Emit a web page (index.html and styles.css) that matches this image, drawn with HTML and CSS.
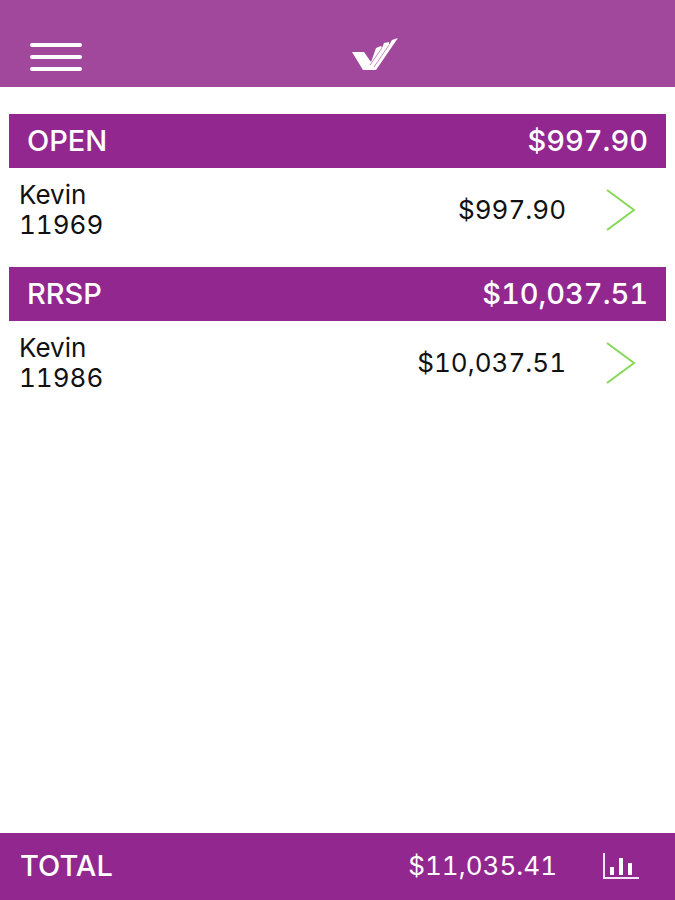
FILE: index.html
```html
<!DOCTYPE html>
<html lang="en">
<head>
  <meta charset="UTF-8">
  <meta name="viewport" content="width=device-width, initial-scale=1.0">
  <title>Accounts</title>
  <link rel="stylesheet" href="styles.css">
</head>
<body>
  <header class="topbar">
    <button class="menu" type="button" aria-label="Menu">
      <svg width="54" height="32" viewBox="0 0 54 32" stroke="#fff" stroke-width="4" stroke-linecap="round">
        <path d="M3 4H51M3 16H51M3 28H51"/>
      </svg>
    </button>
    <svg class="logo" width="48" height="34" viewBox="0 0 48 34" aria-hidden="true">
      <path fill="#fff" d="M1 15H13L20 25 24 14 25 11 30 9 31 11 33 6 38 5 38 8 41 3 47 1 25 33H12Z"/>
      <path fill="none" stroke="#c58ac3" stroke-width="1" d="M31 11 19 28M38 8 23 30"/>
    </svg>
  </header>

  <main class="accounts">
    <section class="group">
      <h2 class="group-title"><span>OPEN</span><span>$997.90</span></h2>
      <a class="account" href="#account-11969">
        <span class="owner">Kevin<br>11969</span>
        <span class="amount">$997.90</span>
        <svg class="arrow" width="30" height="42" viewBox="0 0 30 42" aria-hidden="true">
          <path d="M1 1 28 21 1 41"/>
        </svg>
      </a>
    </section>
    <section class="group">
      <h2 class="group-title"><span>RRSP</span><span>$10,037.51</span></h2>
      <a class="account" href="#account-11986">
        <span class="owner">Kevin<br>11986</span>
        <span class="amount">$10,037.51</span>
        <svg class="arrow" width="30" height="42" viewBox="0 0 30 42" aria-hidden="true">
          <path d="M1 1 28 21 1 41"/>
        </svg>
      </a>
    </section>
  </main>

  <footer class="total">
    <span class="total-label">TOTAL</span>
    <span class="amount">$11,035.41</span>
    <button class="chart" type="button" aria-label="Show chart">
      <svg width="38" height="28" viewBox="0 0 38 28">
        <path fill="none" stroke="#f6e3f5" stroke-width="2" d="M2 1V26H37"/>
        <path fill="#fff" d="M8 15h4v8H8zM17 6h4v17h-4zM26 11h4v12h-4z"/>
      </svg>
    </button>
  </footer>
</body>
</html>
```

FILE: styles.css
```css
* {
  box-sizing: border-box;
}
body {
  margin: 0;
  min-height: 100vh;
  display: flex;
  flex-direction: column;
  font-family: Inter, "Liberation Sans", sans-serif;
  font-size: 26px;
  font-variant-numeric: tabular-nums;
  line-height: 30px;
  color: #111;
  background: #fff;
}
button {
  padding: 0;
  border: none;
  background: none;
  cursor: pointer;
}
svg {
  display: block;
}
.topbar {
  display: grid;
  grid-template-columns: 1fr auto 1fr;
  align-items: end;
  padding: 37px 0 16px 29px;
  background: #a1489d;
}
.menu {
  justify-self: start;
  margin-bottom: -2px;
}
.logo {
  margin-left: 46px;
}
.accounts {
  flex: 1;
  padding: 27px 9px;
}
.group-title {
  display: flex;
  justify-content: space-between;
  margin: 0;
  padding: 12px 18px;
  font-size: 29px;
  font-weight: 500;
  color: #fff;
  background: #92278f;
}
.account {
  display: flex;
  align-items: center;
  padding: 12px 30px 27px 10px;
  color: inherit;
  text-decoration: none;
}
.owner {
  flex: 1;
}
.arrow {
  margin-left: 40px;
  fill: none;
  stroke: #86d957;
  stroke-width: 2;
}
.total {
  display: flex;
  align-items: center;
  padding: 18px 35px 19px 20px;
  color: #fff;
  background: #92278f;
}
.total-label {
  flex: 1;
  font-size: 29px;
  font-weight: 500;
}
.chart {
  margin-left: 45px;
}
```
